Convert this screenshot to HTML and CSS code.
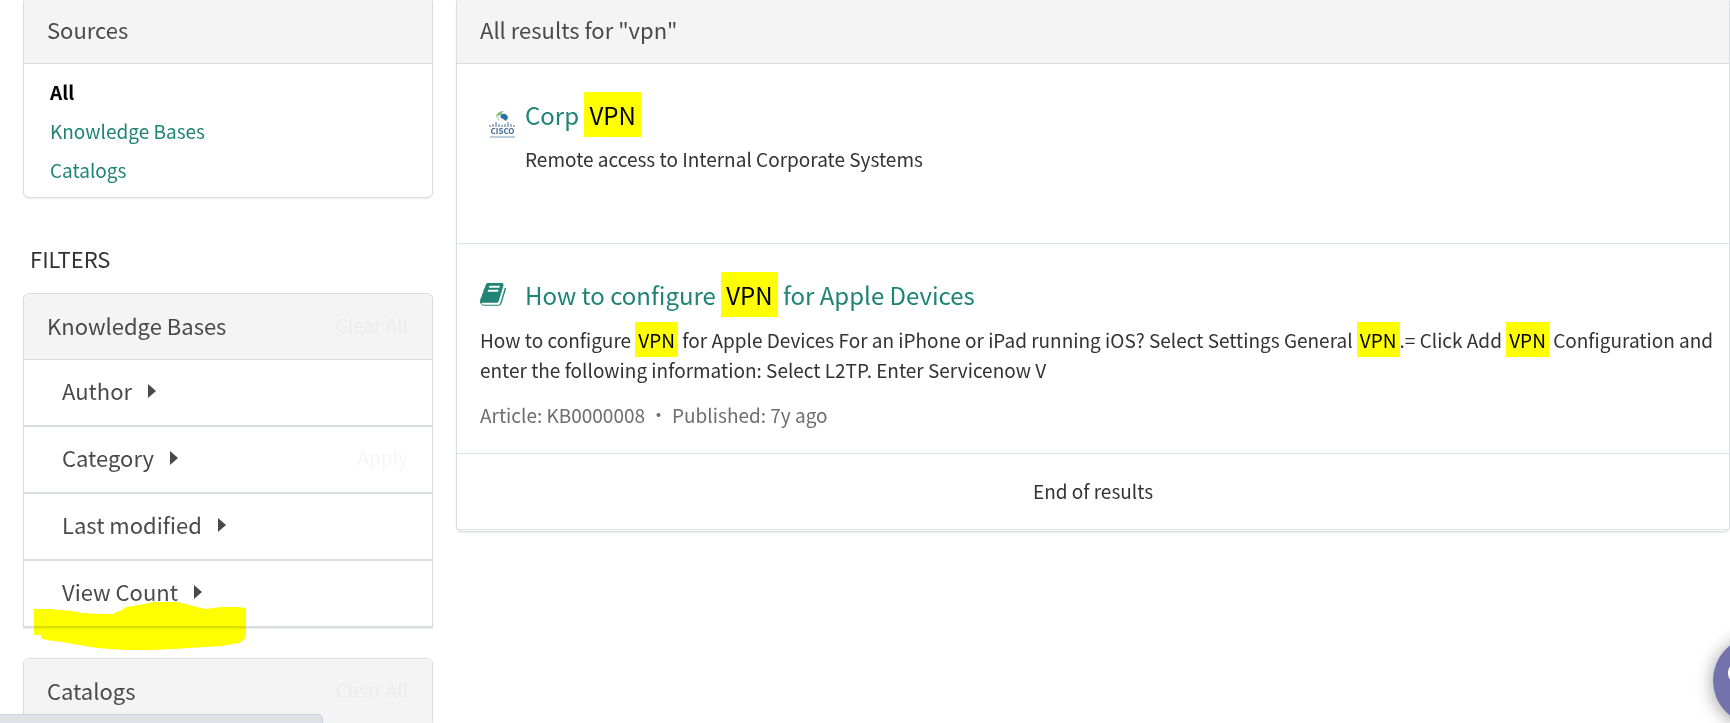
FILE: index.html
```html
<!DOCTYPE html>
<html lang="en">
<head>
  <meta charset="UTF-8">
  <meta name="viewport" content="width=device-width, initial-scale=1.0">
  <title>Search results for "vpn"</title>
  <link rel="stylesheet" href="styles.css">
</head>
<body>
  <div class="page">
    <aside class="sidebar">
      <section class="panel">
        <div class="panel-heading">
          <h2>Sources</h2>
        </div>
        <ul class="source-list">
          <li><a href="#" class="active">All</a></li>
          <li><a href="#">Knowledge Bases</a></li>
          <li><a href="#">Catalogs</a></li>
        </ul>
      </section>

      <h2 class="filters-title">FILTERS</h2>

      <section class="panel panel-filters">
        <div class="panel-heading">
          <h2>Knowledge Bases</h2>
          <button type="button" class="btn-link" disabled>Clear All</button>
        </div>
        <div class="filter-row">
          <button type="button" class="facet">Author <span class="caret"></span></button>
        </div>
        <div class="filter-row">
          <button type="button" class="facet">Category <span class="caret"></span></button>
          <button type="button" class="btn-link btn-apply" disabled>Apply</button>
        </div>
        <div class="filter-row">
          <button type="button" class="facet">Last modified <span class="caret"></span></button>
        </div>
        <div class="filter-row">
          <button type="button" class="facet">View Count <span class="caret"></span></button>
        </div>
        <svg class="marker" width="212" height="49" viewBox="0 0 212 49" aria-hidden="true">
          <path d="M0 7H15L38 9L48 11L68 12H78L88 8L92 5L105 3L120 0H143L152 2L163 5L172 7L186 5H204L212 6V33L210 38L205 41L188 44L170 45L140 47L117 48H90L63 46L45 43L28 40L12 38L7 36V33H0Z" fill="#ffff00"/>
        </svg>
      </section>

      <section class="panel">
        <div class="panel-heading">
          <h2>Catalogs</h2>
          <button type="button" class="btn-link" disabled>Clear All</button>
        </div>
      </section>
    </aside>

    <main class="panel results">
      <div class="panel-heading">
        <h2>All results for "vpn"</h2>
      </div>

      <article class="result result-catalog">
        <svg class="result-logo" width="27" height="28" viewBox="0 0 27 28" aria-hidden="true">
          <path d="M7 6Q9 1 15 1Q12 3 13 5Q9 5 7 7Z" fill="#7fc06f"/>
          <path d="M13 4Q18 3 19 8L17 11L14 9L11 7Z" fill="#2f6fa8"/>
          <path d="M8 7Q8 10 12 11Q9 9 10 7Z" fill="#b9d6c0"/>
          <path d="M1 15v2M4 14v3M7 12v5M10 14v3M13 15v2M16 14v3M19 12v5M22 14v3M25 15v2" stroke="#7d9fc2" stroke-width="1.5"/>
          <text x="13.5" y="24" text-anchor="middle" class="logo-text">CISCO</text>
          <path d="M1 27H26" stroke="#a9bfd6" stroke-width="1.5"/>
        </svg>
        <div class="result-body">
          <h3 class="result-title"><a href="#">Corp <mark>VPN</mark></a></h3>
          <p class="result-text">Remote access to Internal Corporate Systems</p>
        </div>
      </article>

      <article class="result">
        <div class="result-header">
          <svg class="result-icon" width="26" height="24" viewBox="0 0 1664 1536" aria-hidden="true">
            <path fill="#1f8476" d="M1639 266q40 57 18 129l-275 906q-19 64-76.500 107.500T1183 1452H260q-77 0-148.500-53.500T12 1267q-24-67-2-127 0-4 3-27t4-37q1-8-3-21.500t-3-19.500q2-11 8-21t16.500-23.500T52 967q23-38 45-91.500t30-91.500q3-10 .5-30t-.5-28q3-11 17-28t17-23q21-36 42-92t25-90q1-9-2.500-32t.5-28q4-13 22-30.500t22-22.500q19-26 42.500-84.500T340 228q1-8-3-25.500t-2-26.500q2-8 9-18t18-23 17-21q8-12 16.500-30.500t15-35 16-36 19.500-32T472 1t36-11.500 47.500 5.500l-1 3q38-9 51-9h761q74 0 114 56t18 130l-274 906q-36 119-71.500 153.500T1025 1269H156q-27 0-38 15-11 16-1 43 24 70 144 70h923q29 0 56-15.500t35-41.500l300-987q7-22 5-57 38 15 59 43zM575 268q-4 13 2 22.500t20 9.500h608q13 0 25.500-9.500T1247 268l21-64q4-13-2-22.500t-20-9.500H638q-13 0-25.500 9.500T596 204zm-83 256q-4 13 2 22.500t20 9.500h608q13 0 25.500-9.500T1164 524l21-64q4-13-2-22.500t-20-9.500H555q-13 0-25.500 9.500T513 460z"/>
          </svg>
          <h3 class="result-title"><a href="#">How to configure <mark>VPN</mark> for Apple Devices</a></h3>
        </div>
        <p class="result-text">How to configure <mark>VPN</mark> for Apple Devices For an iPhone or iPad running iOS? Select Settings General <mark>VPN</mark>.= Click Add <mark>VPN</mark> Configuration and enter the following information: Select L2TP. Enter Servicenow V</p>
        <p class="result-meta"><span>Article: KB0000008</span><span>·</span><span>Published: 7y ago</span></p>
      </article>

      <div class="results-end">End of results</div>
    </main>

    <button type="button" class="chat-button" aria-label="Chat">
      <svg width="60" height="44" viewBox="0 0 60 44" aria-hidden="true">
        <path d="M20 2C9 2 1 8 1 16c0 5 3 9 8 12l-3 8 10-6h4c11 0 19-6 19-14S31 2 20 2z" fill="#fff"/>
      </svg>
    </button>
    <div class="status-bar"></div>
  </div>
</body>
</html>
```

FILE: styles.css
```css
* {
  box-sizing: border-box;
}

body {
  margin: 0;
  background-color: #fff;
  color: #333;
  font-family: "Noto Sans CJK SC", "Noto Sans", sans-serif;
  font-size: 19px;
  line-height: 30px;
}

h2,
h3,
p,
ul {
  margin: 0;
  padding: 0;
  font-weight: normal;
}

a {
  color: #1f8476;
  text-decoration: none;
}

button {
  padding: 0;
  border: 0;
  background: none;
  font-family: inherit;
}

mark {
  background-color: #ff0;
  color: #000;
  padding: 4px 3px;
}

.page {
  position: relative;
  display: flex;
  align-items: flex-start;
  gap: 23px;
  height: 100vh;
  padding-left: 23px;
  overflow: hidden;
}

/* page is scrolled a little past the top of the panels */
.sidebar,
.results {
  margin-top: -3px;
}

.sidebar {
  flex: 0 0 410px;
}

.panel {
  border: 1px solid #dadddd;
  border-radius: 6px;
  background-color: #fff;
  box-shadow: 0 1px 2px rgba(0, 0, 0, 0.08);
}

.panel-heading {
  display: flex;
  align-items: center;
  justify-content: space-between;
  height: 66px;
  padding: 0 24px 4px 23px;
  border-bottom: 1px solid #dadddd;
  border-radius: 5px 5px 0 0;
  background-color: #f4f4f4;
}

.panel-heading h2 {
  color: #4a4a4a;
  font-size: 22px;
}

.source-list {
  padding: 8px 26px;
  list-style: none;
  line-height: 39px;
}

.source-list .active {
  color: #000;
  font-weight: bold;
}

.filters-title {
  margin: 44px 0 19px;
  padding-left: 7px;
  font-size: 22px;
  line-height: 32px;
}

.panel-filters {
  position: relative;
  margin-bottom: 30px;
  border-bottom: 0;
  border-radius: 6px 6px 0 0;
}

.filter-row {
  display: flex;
  align-items: center;
  justify-content: space-between;
  height: 67px;
  padding: 0 24px 6px 38px;
  border-bottom: 2px solid #dadddd;
}

.facet {
  display: flex;
  align-items: center;
  gap: 16px;
  color: #4a4a4a;
  font-size: 22px;
}

.caret {
  margin-top: 3px;
  border-left: 8px solid #4a4a4a;
  border-top: 7px solid transparent;
  border-bottom: 7px solid transparent;
}

.btn-link {
  color: #ececec;
  font-size: 19px;
}

.btn-apply {
  color: #f6f6f6;
}

/* highlighter stroke over the last filter */
.marker {
  position: absolute;
  left: 10px;
  bottom: -23px;
  mix-blend-mode: multiply;
}

.results {
  flex: 1;
  min-width: 0;
}

.result {
  padding: 29px 10px 23px 23px;
  border-bottom: 1px solid #dce3e4;
}

.result-catalog {
  display: flex;
  gap: 9px;
  min-height: 180px;
  padding-left: 32px;
}

.result-logo {
  margin-top: 17px;
}

.logo-text {
  fill: #3d6596;
  font-size: 8px;
  font-weight: bold;
}

.result-header {
  display: flex;
  align-items: center;
  gap: 19px;
}

.result-title {
  font-size: 24px;
  line-height: 44px;
}

.result-title a {
  display: block;
}

.result-title mark {
  padding: 5px;
}

.result-text {
  margin-top: 7px;
}

.result-header + .result-text {
  margin-top: 8px;
}

.result-meta {
  display: flex;
  gap: 4px;
  margin-top: 15px;
  color: #6e6e6e;
}

.results-end {
  margin-bottom: 1px;
  padding: 22px 0 23px;
  border-bottom: 1px solid #dce3e4;
  text-align: center;
}

.chat-button {
  position: absolute;
  right: -72px;
  bottom: -2px;
  width: 89px;
  height: 89px;
  padding-left: 14px;
  border-radius: 50%;
  background-color: #7472ac;
  box-shadow: 0 2px 18px rgba(0, 0, 0, 0.4);
  text-align: left;
}

.status-bar {
  position: absolute;
  left: 0;
  bottom: 0;
  width: 323px;
  height: 9px;
  border-top: 1px solid #cfd2d8;
  border-right: 1px solid #cfd2d8;
  border-radius: 0 5px 0 0;
  background-color: #dee1e6;
}
```
